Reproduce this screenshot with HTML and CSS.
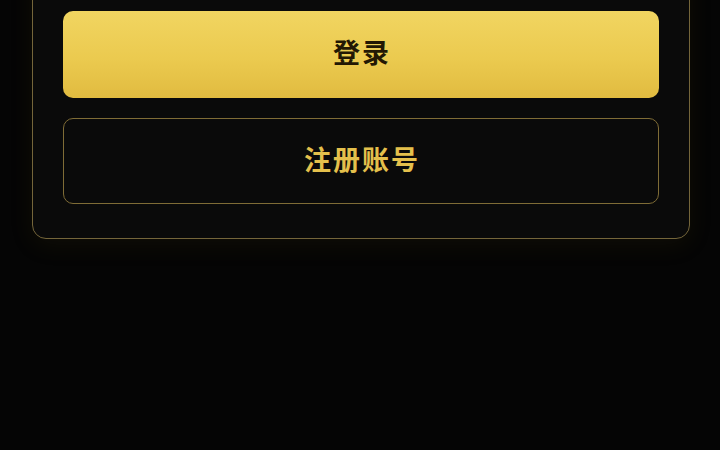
FILE: index.html
```html
<!DOCTYPE html>
<html lang="zh-CN">
<head>
<meta charset="utf-8">
<title>登录</title>
<link rel="stylesheet" href="styles.css">
</head>
<body>
<div class="page">
  <div class="card">
    <div class="actions">
      <button class="btn btn-primary">登录</button>
      <button class="btn btn-outline">注册账号</button>
    </div>
  </div>
</div>
</body>
</html>
```
FILE: styles.css
```css
html, body {
  margin: 0;
  padding: 0;
  background: #050505;
  height: 100%;
}
.page {
  padding: 0 30px 0 32px;
  font-family: "Noto Sans CJK SC", "Noto Sans", sans-serif;
}
.card {
  margin-top: -60px;
  padding: 70px 30px 34px 30px;
  border: 1px solid #74653a;
  border-radius: 14px;
  background: #0a0a0a;
  box-shadow: 0 6px 24px rgba(120, 95, 20, 0.1);
}
.actions {
  display: flex;
  flex-direction: column;
  gap: 20px;
}
.btn {
  display: flex;
  align-items: center;
  justify-content: center;
  width: 100%;
  font-family: inherit;
  font-size: 27px;
  font-weight: 700;
  letter-spacing: 2px;
  padding: 0 0 6px 2px;
  border-radius: 10px;
  cursor: pointer;
}
.btn-primary {
  height: 87px;
  border: none;
  color: #231804;
  background: linear-gradient(180deg, #f1d561 0%, #ebca4f 55%, #e1bb40 100%);
}
.btn-outline {
  height: 86px;
  border: 1px solid #7f6c36;
  background: #0a0a0a;
  color: #e4c04c;
}
```
